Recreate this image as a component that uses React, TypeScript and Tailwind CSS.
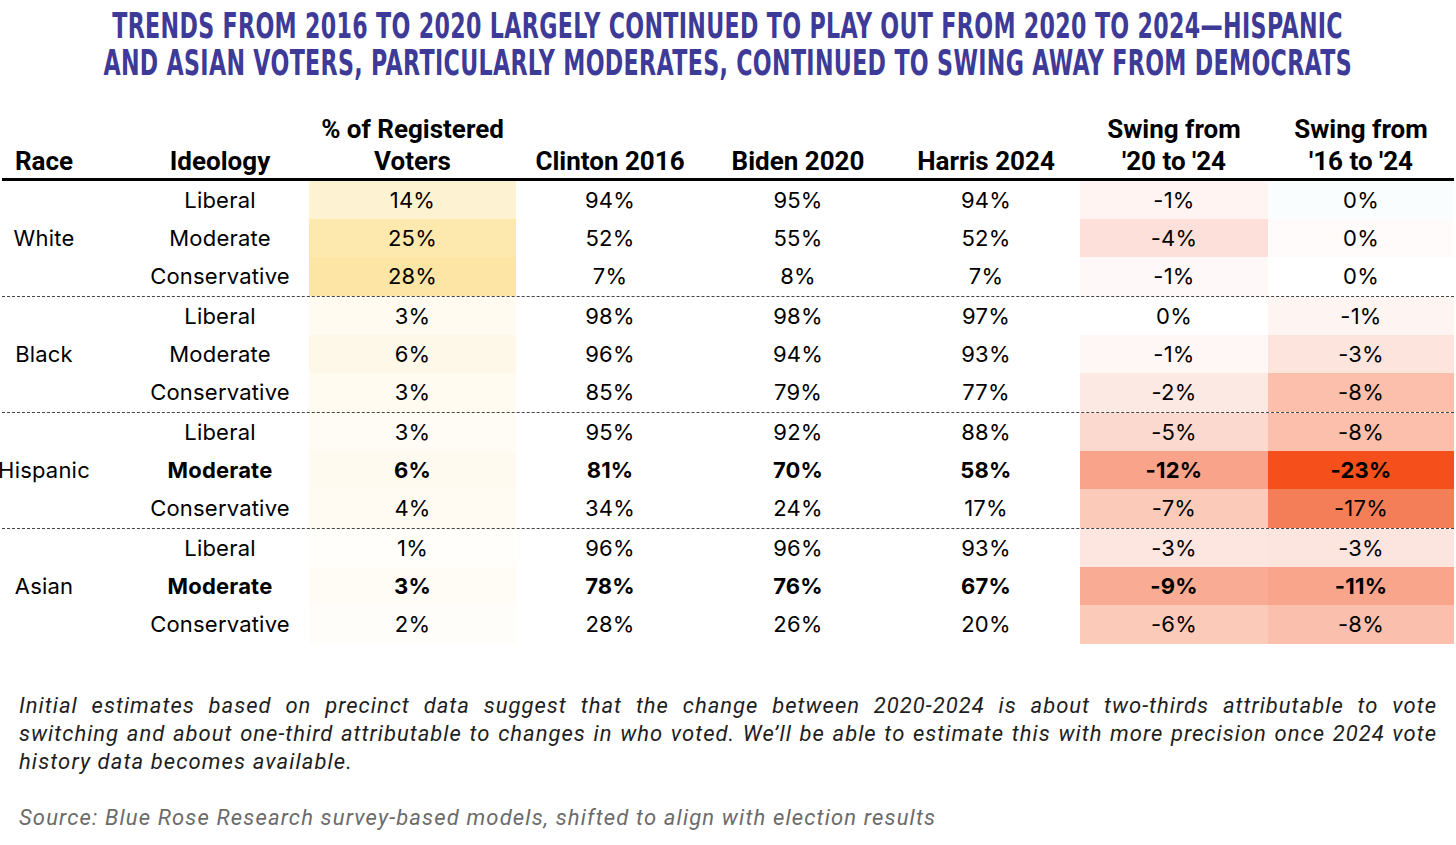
import React from "react";

type Row = {
  ideology: string;
  pct: string;
  clinton: string;
  biden: string;
  harris: string;
  swing20: string;
  swing16: string;
  bold?: boolean;
  pctBg: string;
  s20Bg: string;
  s16Bg: string;
};

type Group = { race: string; rows: Row[] };

const groups: Group[] = [
  {
    race: "White",
    rows: [
      { ideology: "Liberal", pct: "14%", clinton: "94%", biden: "95%", harris: "94%", swing20: "-1%", swing16: "0%", pctBg: "bg-[#fdf2d2]", s20Bg: "bg-[#fff4f2]", s16Bg: "bg-[#f9fdfd]" },
      { ideology: "Moderate", pct: "25%", clinton: "52%", biden: "55%", harris: "52%", swing20: "-4%", swing16: "0%", pctBg: "bg-[#fde8ae]", s20Bg: "bg-[#fde0d9]", s16Bg: "bg-[#fffbfa]" },
      { ideology: "Conservative", pct: "28%", clinton: "7%", biden: "8%", harris: "7%", swing20: "-1%", swing16: "0%", pctBg: "bg-[#fde5a5]", s20Bg: "bg-[#fef9f8]", s16Bg: "bg-white" },
    ],
  },
  {
    race: "Black",
    rows: [
      { ideology: "Liberal", pct: "3%", clinton: "98%", biden: "98%", harris: "97%", swing20: "0%", swing16: "-1%", pctBg: "bg-[#fffbf0]", s20Bg: "bg-white", s16Bg: "bg-[#fef5f3]" },
      { ideology: "Moderate", pct: "6%", clinton: "96%", biden: "94%", harris: "93%", swing20: "-1%", swing16: "-3%", pctBg: "bg-[#fef8e9]", s20Bg: "bg-[#fef7f5]", s16Bg: "bg-[#fde4dc]" },
      { ideology: "Conservative", pct: "3%", clinton: "85%", biden: "79%", harris: "77%", swing20: "-2%", swing16: "-8%", pctBg: "bg-[#fffbf0]", s20Bg: "bg-[#fde9e4]", s16Bg: "bg-[#fbbfac]" },
    ],
  },
  {
    race: "Hispanic",
    rows: [
      { ideology: "Liberal", pct: "3%", clinton: "95%", biden: "92%", harris: "88%", swing20: "-5%", swing16: "-8%", pctBg: "bg-[#fffcf5]", s20Bg: "bg-[#fcd9ce]", s16Bg: "bg-[#fbbfac]" },
      { ideology: "Moderate", pct: "6%", clinton: "81%", biden: "70%", harris: "58%", swing20: "-12%", swing16: "-23%", bold: true, pctBg: "bg-[#fffaef]", s20Bg: "bg-[#f9a38b]", s16Bg: "bg-[#f5501c]" },
      { ideology: "Conservative", pct: "4%", clinton: "34%", biden: "24%", harris: "17%", swing20: "-7%", swing16: "-17%", pctBg: "bg-[#fffbf3]", s20Bg: "bg-[#fccab9]", s16Bg: "bg-[#f47e58]" },
    ],
  },
  {
    race: "Asian",
    rows: [
      { ideology: "Liberal", pct: "1%", clinton: "96%", biden: "96%", harris: "93%", swing20: "-3%", swing16: "-3%", pctBg: "bg-[#fffefb]", s20Bg: "bg-[#fce6df]", s16Bg: "bg-[#fbe5de]" },
      { ideology: "Moderate", pct: "3%", clinton: "78%", biden: "76%", harris: "67%", swing20: "-9%", swing16: "-11%", bold: true, pctBg: "bg-[#fffcf6]", s20Bg: "bg-[#f9ac93]", s16Bg: "bg-[#f9a58b]" },
      { ideology: "Conservative", pct: "2%", clinton: "28%", biden: "26%", harris: "20%", swing20: "-6%", swing16: "-8%", pctBg: "bg-[#fffdf9]", s20Bg: "bg-[#fbcab9]", s16Bg: "bg-[#fac0ad]" },
    ],
  },
];

const cols = "grid grid-cols-[84px_45px_178px_207px_188px_188px_188px_188px_186px]";
const bodyFont = "font-['Inter','Liberation_Sans',sans-serif]";

const Cell = ({ children, className = "" }: { children: React.ReactNode; className?: string }) => (
  <div className={`flex items-center justify-center whitespace-nowrap ${className}`}>{children}</div>
);

const TitleLine = ({ children }: { children: React.ReactNode }) => (
  <div className="flex justify-center whitespace-nowrap">
    <span className="inline-block scale-x-[0.634]">{children}</span>
  </div>
);

export default function App() {
  return (
    <div className="w-[1456px] h-[845px] bg-white text-black overflow-hidden">
      {/* Title */}
      <h1 className="pt-[8px] text-[#3d3a98] font-['DejaVu_Sans',sans-serif] font-bold text-[35px] leading-[37px] tracking-[0.5px] uppercase">
        <TitleLine>Trends from 2016 to 2020 largely continued to play out from 2020 to 2024—Hispanic</TitleLine>
        <TitleLine>and Asian voters, particularly moderates, continued to swing away from Democrats</TitleLine>
      </h1>

      {/* Table */}
      <div className="px-[2px] mt-[31px]">
        <div className={`${cols} font-['Roboto','Liberation_Sans',sans-serif] font-bold text-[26px] leading-[32px] border-b-[3px] border-black pb-[1px]`}>
          <div className="flex items-end justify-center">Race</div>
          <div />
          <div className="flex items-end justify-center">Ideology</div>
          <div className="flex flex-col items-center justify-end">
            <span>% of Registered</span>
            <span>Voters</span>
          </div>
          <div className="flex items-end justify-center">Clinton 2016</div>
          <div className="flex items-end justify-center">Biden 2020</div>
          <div className="flex items-end justify-center">Harris 2024</div>
          <div className="flex flex-col items-center justify-end">
            <span>Swing from</span>
            <span>'20 to '24</span>
          </div>
          <div className="flex flex-col items-center justify-end">
            <span>Swing from</span>
            <span>'16 to '24</span>
          </div>
        </div>

        {groups.map((g, gi) => (
          <div
            key={g.race}
            className={`${cols} grid-rows-[38px_38px_39px] ${bodyFont} text-[22px] tracking-[0.2px] ${gi < groups.length - 1 ? "border-b border-dashed border-[#444]" : ""}`}
          >
            <Cell className="row-span-3 col-start-1 row-start-1">{g.race}</Cell>
            {g.rows.map((r, ri) => {
              const w = r.bold ? "font-bold" : "";
              const rs = ["row-start-1", "row-start-2", "row-start-3"][ri];
              return (
                <React.Fragment key={r.ideology}>
                  <Cell className={`col-start-3 ${rs} ${w}`}>{r.ideology}</Cell>
                  <Cell className={`col-start-4 ${rs} ${w} ${r.pctBg}`}>{r.pct}</Cell>
                  <Cell className={`col-start-5 ${rs} ${w}`}>{r.clinton}</Cell>
                  <Cell className={`col-start-6 ${rs} ${w}`}>{r.biden}</Cell>
                  <Cell className={`col-start-7 ${rs} ${w}`}>{r.harris}</Cell>
                  <Cell className={`col-start-8 ${rs} ${w} ${r.s20Bg}`}>{r.swing20}</Cell>
                  <Cell className={`col-start-9 ${rs} ${w} ${r.s16Bg}`}>{r.swing16}</Cell>
                </React.Fragment>
              );
            })}
          </div>
        ))}
      </div>

      {/* Notes */}
      <div className="px-[19px] mt-[48px] font-['Roboto','Liberation_Sans',sans-serif] italic text-[22px] leading-[28px]">
        <div className="text-[#1e1e1e] tracking-[1px]">
          <p className="whitespace-nowrap text-justify [text-align-last:justify]">
            Initial estimates based on precinct data suggest that the change between 2020-2024 is about two-thirds attributable to vote
          </p>
          <p className="whitespace-nowrap text-justify [text-align-last:justify]">
            switching and about one-third attributable to changes in who voted. We’ll be able to estimate this with more precision once 2024 vote
          </p>
          <p className="tracking-[1.1px]">history data becomes available.</p>
        </div>
        <p className="mt-[28px] text-[#6b6b6b] tracking-[1.15px]">Source: Blue Rose Research survey-based models, shifted to align with election results</p>
      </div>
    </div>
  );
}
